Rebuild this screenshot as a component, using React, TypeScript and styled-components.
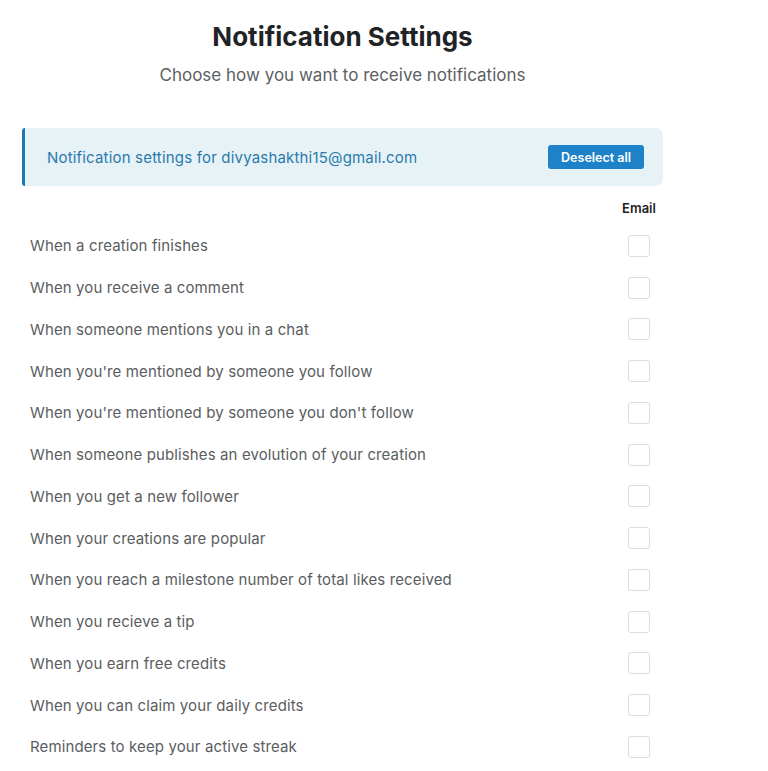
import React, { useState } from "react";
import styled, { createGlobalStyle } from "styled-components";

const GlobalStyle = createGlobalStyle`
  body {
    margin: 0;
    background: #ffffff;
    font-family: "Inter", "Liberation Sans", sans-serif;
  }
`;

const Page = styled.div`
  width: 641px;
  padding: 18px 0 0 22px;
`;

const Header = styled.div`
  display: flex;
  flex-direction: column;
  align-items: center;
  padding-bottom: 42px;
`;

const Title = styled.h1`
  margin: 0;
  font-size: 26px;
  line-height: 38px;
  font-weight: 700;
  color: #1f2326;
`;

const Subtitle = styled.p`
  margin: 0;
  margin-top: 8px;
  font-size: 17px;
  line-height: 22px;
  font-weight: 400;
  color: #5c5f62;
`;

const Banner = styled.div`
  display: flex;
  align-items: center;
  justify-content: space-between;
  height: 58px;
  padding: 0 19px 0 22px;
  background: #e6f2f6;
  border-left: 3px solid #1c78b4;
  border-radius: 3px 8px 8px 3px;
`;

const BannerText = styled.span`
  font-size: 15px;
  letter-spacing: 0.18px;
  color: #2a7aab;
`;

const Button = styled.button`
  height: 24px;
  padding: 0 13px;
  border: none;
  border-radius: 3px;
  background: #1e82c8;
  color: #ffffff;
  font-family: "Inter", "Liberation Sans", sans-serif;
  font-size: 12.5px;
  font-weight: 600;
  cursor: pointer;
`;

const HeadRow = styled.div`
  display: flex;
  justify-content: flex-end;
  padding: 14px 0 0;
  height: 18px;
`;

const ColLabel = styled.span`
  width: 46px;
  margin-right: 1px;
  text-align: center;
  font-size: 13px;
  font-weight: 600;
  color: #1f2326;
`;

const List = styled.div`
  display: flex;
  flex-direction: column;
  padding-top: 7px;
`;

const Row = styled.label`
  display: flex;
  align-items: center;
  justify-content: space-between;
  height: 41.75px;
  padding-left: 8px;
  cursor: pointer;
`;

const RowText = styled.span`
  font-size: 15px;
  letter-spacing: 0.12px;
  color: #5a5d60;
`;

const CheckCell = styled.span`
  width: 46px;
  margin-right: 1px;
  display: flex;
  justify-content: center;
`;

const Box = styled.span<{ $on: boolean }>`
  box-sizing: border-box;
  width: 22px;
  height: 22px;
  border: 1.5px solid #dcdcdc;
  border-radius: 3px;
  background: ${(p) => (p.$on ? "#1e82c8" : "#fff")};
`;

const items = [
  "When a creation finishes",
  "When you receive a comment",
  "When someone mentions you in a chat",
  "When you're mentioned by someone you follow",
  "When you're mentioned by someone you don't follow",
  "When someone publishes an evolution of your creation",
  "When you get a new follower",
  "When your creations are popular",
  "When you reach a milestone number of total likes received",
  "When you recieve a tip",
  "When you earn free credits",
  "When you can claim your daily credits",
  "Reminders to keep your active streak",
];

export default function App() {
  const [checked, setChecked] = useState<boolean[]>(items.map(() => false));

  const toggle = (i: number) =>
    setChecked((c) => c.map((v, j) => (j === i ? !v : v)));

  return (
    <>
      <GlobalStyle />
      <Page>
        <Header>
          <Title>Notification Settings</Title>
          <Subtitle>Choose how you want to receive notifications</Subtitle>
        </Header>
        <Banner>
          <BannerText>Notification settings for divyashakthi15@gmail.com</BannerText>
          <Button onClick={() => setChecked(items.map(() => false))}>Deselect all</Button>
        </Banner>
        <HeadRow>
          <ColLabel>Email</ColLabel>
        </HeadRow>
        <List>
          {items.map((t, i) => (
            <Row key={t} onClick={() => toggle(i)}>
              <RowText>{t}</RowText>
              <CheckCell>
                <Box $on={checked[i]} />
              </CheckCell>
            </Row>
          ))}
        </List>
      </Page>
    </>
  );
}
